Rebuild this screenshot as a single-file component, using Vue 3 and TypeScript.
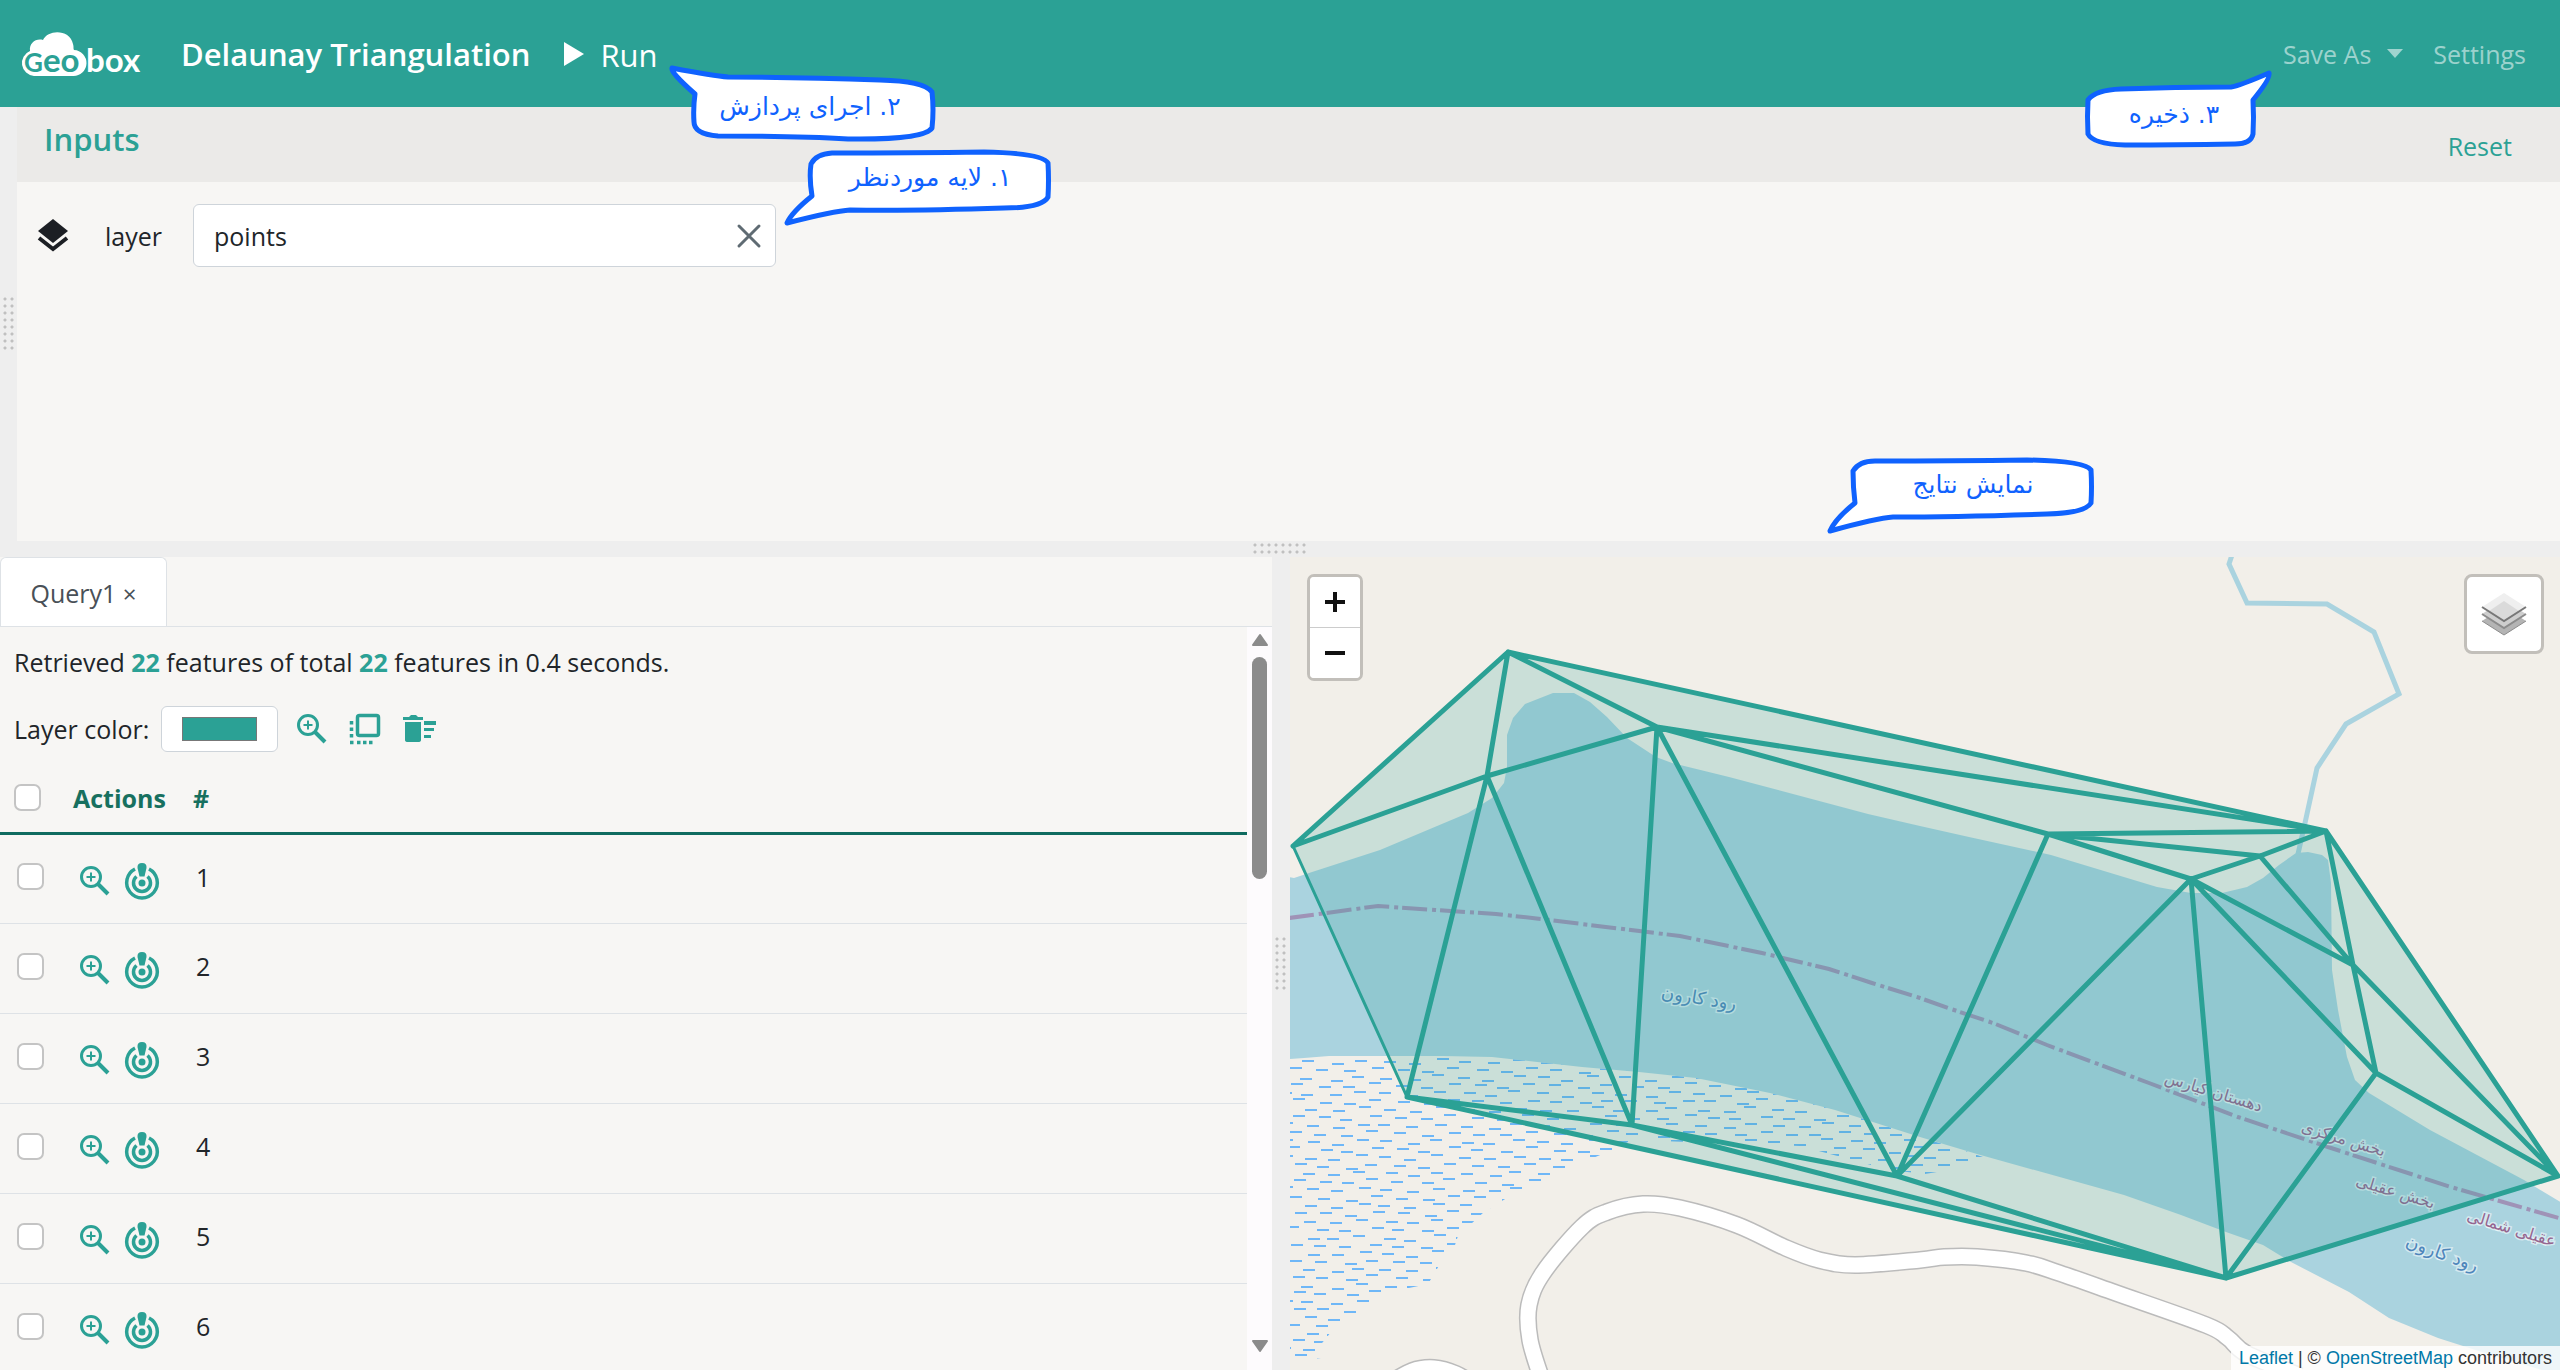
<script setup lang="ts">
import { ref } from 'vue'

type Pt = [number, number]

interface Callout {
  id: string
  text: string
  shape: string
  width: number
  height: number
}

const layerName = ref('points')
const layerColor = ref('#2ba195')
const rows = ref([1, 2, 3, 4, 5, 6].map((n) => ({ n, checked: false })))
const allChecked = ref(false)

const callouts: Callout[] = [
  {
    id: 'at-run',
    text: '۲. اجرای پردازش',
    width: 268,
    height: 78,
    shape: 'M4 4Q2 8 27 30Q25 44 26 58Q26 70 50 72Q130 72 180 75Q256 76 264 64Q266 46 264 28Q256 17 212 16Q130 13 60 13Q46 12 4 4Z',
  },
  {
    id: 'at-layer',
    text: '۱. لایه موردنظر',
    width: 268,
    height: 78,
    shape: 'M3 73Q8 62 28 46Q25 28 27 14Q32 4 48 3Q130 3 200 2Q258 3 264 13Q265 30 264 47Q258 58 220 58Q130 61 66 60Q50 61 3 73Z',
  },
  {
    id: 'at-save',
    text: '۳. ذخیره',
    width: 188,
    height: 78,
    shape: 'M184 3Q186 8 168 30Q169 48 168 64Q166 74 150 74Q90 75 40 75Q8 74 3 64Q2 46 3 30Q10 20 36 19Q90 17 146 17Q154 16 184 3Z',
  },
  {
    id: 'at-results',
    text: 'نمایش نتایج',
    width: 268,
    height: 78,
    shape: 'M3 74Q8 62 28 46Q26 30 26 14Q32 4 48 4Q130 4 200 3Q258 4 264 13Q265 30 264 46Q258 56 220 57Q130 60 66 60Q50 61 3 74Z',
  },
]

/* Map geometry, in page units; the viewBox starts at the map's corner. */
const vertices: Record<string, Pt> = {
  a: [1508, 652], b: [1293, 846], c: [1487, 776], d: [1657, 727],
  e: [2326, 831], f: [2048, 834], g: [2260, 856], h: [2191, 879],
  i: [2353, 965], j: [2376, 1073], k: [2558, 1176], l: [2226, 1278],
  m: [1407, 1097], n: [1632, 1125], o: [1897, 1176],
}
const edges =
  'ab bc ac cd ad ae de df ef fg fh ge gh hi gi ei ek hj ij ik jk jl kl hl ho fo do dn cn cm mn ml no nl ol'.split(' ')
const edgePath = edges
  .map((e) => `M${vertices[e[0]].join(' ')}L${vertices[e[1]].join(' ')}`)
  .join('')
const hull = ['a', 'e', 'k', 'l', 'm', 'b'].map((v) => vertices[v].join(',')).join(' ')

const water =
  '1289,877 1294,878 1309,873 1380,850 1468,813 1492,798 1504,783 1507,767 1507,735 1513,718 1525,704 1553,693 1574,693 1590,702 1607,717 1627,738 1656,757 1672,763 1729,777 1868,814 1920,826 1969,837 2051,855 2157,887 2191,893 2222,893 2247,887 2263,878 2279,865 2296,853 2308,852 2322,855 2328,860 2331,883 2332,970 2338,1010 2347,1057 2355,1080 2369,1093 2430,1130 2524,1180 2562,1203 2562,1376 2485,1353 2438,1338 2389,1318 2349,1292 2291,1262 2263,1245 2226,1232 2181,1215 2124,1195 1977,1154 1920,1137 1876,1123 1835,1110 1770,1093 1696,1078 1639,1072 1582,1067 1492,1057 1443,1056 1329,1056 1304,1058 1289,1059'
const swampArea =
  '1289,1059 1304,1058 1329,1056 1443,1056 1492,1057 1582,1067 1639,1072 1696,1078 1770,1093 1835,1110 1876,1123 1920,1137 1968,1152 1986,1158 1984,1164 1925,1174 1890,1170 1800,1146 1632,1140 1612,1150 1560,1172 1510,1196 1484,1212 1458,1236 1452,1254 1440,1264 1428,1284 1390,1292 1362,1310 1336,1326 1318,1348 1312,1358 1366,1364 1366,1370 1289,1370'
const stream =
  '2232,555 2229,564 2247,603 2327,604 2374,632 2399,694 2346,724 2317,768 2305,823 2298,854'
const boundary =
  '1289,918 1378,906 1435,910 1496,914 1541,919 1680,936 1762,953 1829,969 1872,983 1920,998 1951,1009 1993,1023 2047,1045 2149,1083 2238,1117 2328,1147 2451,1187 2562,1219'

const road: Pt[] = [
  [1542, 1380], [1530, 1340], [1529, 1305], [1543, 1273], [1582, 1227], [1607, 1212],
  [1643, 1204], [1680, 1208], [1737, 1225], [1786, 1248], [1819, 1260], [1855, 1265],
  [1920, 1260], [1944, 1257], [1977, 1257], [2026, 1263], [2059, 1273], [2116, 1293],
  [2206, 1325], [2228, 1338], [2247, 1354], [2300, 1376],
]
const sideRoad: Pt[] = [[1385, 1386], [1412, 1371], [1434, 1368], [1456, 1374], [1480, 1388]]

function smooth(p: Pt[]): string {
  let d = `M${p[0][0]} ${p[0][1]}`
  for (let i = 0; i < p.length - 1; i++) {
    const p0 = p[Math.max(i - 1, 0)]
    const p1 = p[i]
    const p2 = p[i + 1]
    const p3 = p[Math.min(i + 2, p.length - 1)]
    d += `C${p1[0] + (p2[0] - p0[0]) / 6} ${p1[1] + (p2[1] - p0[1]) / 6} ${p2[0] - (p3[0] - p1[0]) / 6} ${p2[1] - (p3[1] - p1[1]) / 6} ${p2[0]} ${p2[1]}`
  }
  return d
}
const roads = [smooth(road), smooth(sideRoad)]

function swampDashes(): string {
  let d = ''
  let seed = 7
  const rand = () => {
    seed = (seed * 16807) % 2147483647
    return seed / 2147483647
  }
  for (let r = 0; r < 38; r++) {
    for (let c = 0; c < 29; c++) {
      const x = 1278 + c * 26 + (r % 2) * 13 + Math.round(rand() * 8 - 4)
      const y = 1059 + r * 8 + (c % 3) * 2 + Math.round(rand() * 2)
      d += `M${x} ${y}h12`
    }
  }
  return d
}
const swamp = swampDashes()
</script>

<template>
  <div class="app">
    <header class="topbar">
      <a class="logo" href="#" aria-label="Geobox">
        <svg width="124" height="48" viewBox="0 0 124 48">
          <path
            d="M14 46A13 13 0 0 1 10 21C9 13 16 8 23 10C28 -1 50 -1 53 14C54 17 53 19 54 20A13 13 0 0 1 53 46Z"
            fill="#fff"
          />
          <text x="4" y="42" class="logo-geo"><tspan class="cap">G</tspan>eo</text>
          <text x="66" y="42" class="logo-box">box</text>
        </svg>
      </a>
      <h1>Delaunay Triangulation</h1>
      <button class="run" type="button">
        <svg width="20" height="24" viewBox="0 0 20 24"><path d="M0 0L20 12L0 24Z" fill="#fff" /></svg>
        <span>Run</span>
      </button>
      <nav>
        <button class="nav-item" type="button">
          Save As
          <svg width="16" height="9" viewBox="0 0 16 9"><path d="M0 0H16L8 9Z" fill="currentColor" /></svg>
        </button>
        <a class="nav-item" href="#">Settings</a>
      </nav>
    </header>

    <section class="inputs">
      <div class="side-handle"><i class="grip tall"></i></div>
      <div class="inputs-panel">
        <div class="inputs-head">
          <h2>Inputs</h2>
          <a href="#">Reset</a>
        </div>
        <div class="field">
          <svg width="32" height="34" viewBox="0 0 32 34">
            <path d="M16 0L31 12L16 24L1 12Z" fill="#1c1f24" />
            <path d="M2 19L16 30L30 19" fill="none" stroke="#1c1f24" stroke-width="4" />
          </svg>
          <label for="layer">layer</label>
          <div class="combo">
            <input id="layer" v-model="layerName" type="text" />
            <button type="button" aria-label="Clear" @click="layerName = ''">
              <svg width="24" height="24" viewBox="0 0 24 24">
                <path d="M2 2L22 22M22 2L2 22" stroke="#5f6b73" stroke-width="3" stroke-linecap="round" />
              </svg>
            </button>
          </div>
        </div>
      </div>
    </section>

    <div class="row-splitter"><i class="grip wide"></i></div>

    <section class="results">
      <div class="query">
        <div class="tabs">
          <button class="tab" type="button">Query1 <span class="close">×</span></button>
        </div>
        <div class="query-body">
          <div class="query-content">
            <p class="summary">Retrieved <b>22</b> features of total <b>22</b> features in 0.4 seconds.</p>
            <div class="tools">
              <label for="color">Layer color:</label>
              <input id="color" v-model="layerColor" type="color" />
              <button type="button" aria-label="Zoom to layer">
                <svg width="32" height="32" viewBox="0 0 32 32" class="line-icon">
                  <circle cx="12" cy="12" r="9.5" stroke-width="3" />
                  <path d="M12 7.500V16.500M7.500 12H16.500" stroke-width="2" />
                  <path d="M19 19L29 29" stroke-width="4" />
                </svg>
              </button>
              <button type="button" aria-label="Bring to front">
                <svg width="32" height="32" viewBox="0 0 32 32" class="line-icon">
                  <rect x="8.500" y="2.500" width="21" height="20" rx="2" stroke-width="3.500" />
                  <path d="M2.500 8V11.500M2.500 14.500V18M2.500 21V24.500M8 29.500H11.500M14 29.500H17.500M20 29.500H23.500" stroke-width="3.500" />
                  <path d="M1 29.500H4.500" stroke-width="3.500" />
                </svg>
              </button>
              <button type="button" aria-label="Clear results">
                <svg width="34" height="32" viewBox="0 0 34 32" fill="#2ba195">
                  <path d="M1 4H7L9 2H14L16 4H21V7H1ZM3 9H19V27Q19 29 16 29H6Q3 29 3 27Z" />
                  <path d="M22 8H34V12H22ZM22 15H32V18H22ZM22 22H29V25H22Z" />
                </svg>
              </button>
            </div>
            <table>
              <thead>
                <tr>
                  <th class="pick"><input v-model="allChecked" type="checkbox" aria-label="Select all" /></th>
                  <th class="actions">Actions</th>
                  <th>#</th>
                </tr>
              </thead>
              <tbody>
                <tr v-for="row in rows" :key="row.n">
                  <td class="pick"><input v-model="row.checked" type="checkbox" :aria-label="`Select row ${row.n}`" /></td>
                  <td class="actions">
                    <div class="action-set">
                      <button type="button" aria-label="Zoom to feature">
                        <svg width="32" height="32" viewBox="0 0 32 32" class="line-icon">
                          <circle cx="12" cy="12" r="9.5" stroke-width="3" />
                          <path d="M12 7.500V16.500M7.500 12H16.500" stroke-width="2" />
                          <path d="M19 19L29 29" stroke-width="4" />
                        </svg>
                      </button>
                      <button type="button" aria-label="Locate feature">
                        <svg width="36" height="40" viewBox="0 0 36 40" class="line-icon">
                          <path d="M11 8A15.300 15.300 0 1 0 25 8" stroke-width="3.500" />
                          <path d="M12.500 15.500A8.500 8.500 0 1 0 23.500 15.500" stroke-width="3.500" />
                          <circle cx="18" cy="22" r="3.500" class="solid" />
                          <path d="M18 2Q23 2 22.500 7L20.500 15.500H15.500L13.500 7Q13 2 18 2Z" class="solid" />
                        </svg>
                      </button>
                    </div>
                  </td>
                  <td class="num">{{ row.n }}</td>
                </tr>
              </tbody>
            </table>
          </div>
          <div class="scroll" aria-hidden="true">
            <svg width="16" height="12" viewBox="0 0 16 12"><path d="M8 1L15 11H1Z" class="arrow" /></svg>
            <i class="thumb"></i>
            <svg width="16" height="12" viewBox="0 0 16 12"><path d="M8 11L15 1H1Z" class="arrow" /></svg>
          </div>
        </div>
      </div>

      <div class="col-splitter"><i class="grip tall"></i></div>

      <div class="map">
        <svg class="map-canvas" viewBox="1290 557 1270 813" preserveAspectRatio="xMinYMin slice">
          <defs>
            <clipPath id="swamp-area"><polygon :points="swampArea" /></clipPath>
          </defs>
          <polygon :points="water" fill="#aad3df" />
          <polyline :points="stream" fill="none" stroke="#aad3df" stroke-width="5" />
          <path :d="swamp" stroke="#6fb7f7" stroke-width="2" clip-path="url(#swamp-area)" />
          <g fill="none">
            <path v-for="d in roads" :key="d" :d="d" stroke="#bbb" stroke-width="18" />
            <path v-for="d in roads" :key="d" :d="d" stroke="#fff" stroke-width="15" />
          </g>
          <polyline
            :points="boundary" fill="none" stroke="#94538f" stroke-opacity="0.5"
            stroke-width="4" stroke-dasharray="25 5 4 4"
          />
          <g class="map-labels">
            <text class="river" transform="translate(1698 1004) rotate(9)">رود کارون</text>
            <text transform="translate(2212 1097) rotate(17)">دهستان کیارس</text>
            <text transform="translate(2342 1144) rotate(17)">بخش مرکزی</text>
            <text transform="translate(2394 1197) rotate(17)">بخش عقیلی</text>
            <text class="from-left" transform="translate(2466 1220) rotate(17)">عقیلی شمالی</text>
            <text class="river" transform="translate(2440 1259) rotate(20)">رود کارون</text>
          </g>
          <polygon :points="hull" :fill="layerColor" fill-opacity="0.2" />
          <g fill="none" :stroke="layerColor" stroke-linejoin="round" stroke-linecap="round">
            <path :d="edgePath" stroke-width="5" />
            <path d="M1293 846L1407 1097" stroke-width="3" />
          </g>
        </svg>
        <div class="zoom">
          <button type="button" aria-label="Zoom in">
            <svg width="20" height="20" viewBox="0 0 20 20"><path d="M10 0V20M0 10H20" stroke="#111" stroke-width="4" /></svg>
          </button>
          <button type="button" aria-label="Zoom out">
            <svg width="20" height="20" viewBox="0 0 20 20"><path d="M0 10H20" stroke="#111" stroke-width="4" /></svg>
          </button>
        </div>
        <button class="layers" type="button" aria-label="Layers">
          <svg width="46" height="46" viewBox="0 0 46 46">
            <path d="M1 30L23 16L45 30L23 44Z" fill="#b4b4b4" />
            <path d="M1 30L23 44L45 30" fill="none" stroke="#8c8c8c" />
            <path d="M1 23L23 9L45 23L23 37Z" fill="#cecece" />
            <path d="M1 23L23 37L45 23" fill="none" stroke="#8c8c8c" stroke-width="2" />
            <path d="M1 16L23 2L45 16L23 30Z" fill="#efefef" />
            <path d="M8 20L23 10L38 20L23 29Z" fill="#dadada" />
            <path d="M1 16L23 30L45 16" fill="none" stroke="#777" stroke-width="2" />
          </svg>
        </button>
        <div class="credit"><a href="#">Leaflet</a> | © <a href="#">OpenStreetMap</a> contributors</div>
      </div>
    </section>

    <aside v-for="c in callouts" :key="c.id" class="callout" :class="c.id">
      <svg :width="c.width" :height="c.height" :viewBox="`0 0 ${c.width} ${c.height}`">
        <path :d="c.shape" fill="#fff" stroke="#0f62fe" stroke-width="5" stroke-linejoin="round" />
      </svg>
      <span dir="rtl">{{ c.text }}</span>
    </aside>
  </div>
</template>

<style>
body {
  overflow: hidden;
}
</style>

<style scoped>
.app {
  position: relative;
  display: flex;
  flex-direction: column;
  height: 100vh;
  overflow: hidden;
  background: #f7f6f4;
  color: #212529;
  font: 25px/36px "Open Sans", "Noto Sans", sans-serif;
}
.app * {
  box-sizing: border-box;
}
svg {
  display: block;
  flex: none;
  overflow: visible;
}
button {
  padding: 0;
  border: 0;
  background: none;
  color: inherit;
  font: inherit;
  cursor: pointer;
}
a {
  text-decoration: none;
}

.topbar {
  display: flex;
  align-items: center;
  flex: 0 0 107px;
  padding: 0 34px 0 20px;
  background: #2ba195;
  color: #fff;
}
.logo-geo,
.logo-box {
  font: 700 33px "Lato", sans-serif;
  fill: #fff;
}
.logo-geo {
  fill: #2ba195;
}
.cap {
  font-size: 26px;
}
h1 {
  margin: 0 0 0 37px;
  font-size: 31px;
  line-height: 40px;
  font-weight: 600;
}
.run {
  display: flex;
  align-items: center;
  gap: 16px;
  margin-left: 34px;
  font-size: 31px;
  line-height: 40px;
}
.run span {
  padding-top: 3px;
}
nav {
  display: flex;
  gap: 30px;
  margin-left: auto;
  color: rgba(255, 255, 255, 0.55);
}
.nav-item {
  display: flex;
  align-items: center;
  gap: 16px;
  color: inherit;
}

.inputs {
  display: flex;
  flex: 0 0 434px;
}
.side-handle {
  display: flex;
  align-items: center;
  flex: 0 0 17px;
  padding-left: 3px;
  background: #eee;
}
.grip {
  background: radial-gradient(circle at 2px 2px, #c0c0c0 1px, transparent 2px) 0 0 / 7px 7px;
}
.grip.tall {
  width: 12px;
  height: 54px;
}
.grip.wide {
  width: 54px;
  height: 12px;
}
.inputs-panel {
  flex: 1;
}
.inputs-head {
  display: flex;
  align-items: center;
  justify-content: space-between;
  height: 75px;
  padding: 0 48px 0 27px;
  background: #ebeae8;
}
.inputs-head a {
  margin-top: 2px;
  color: #2ba195;
}
h2 {
  margin: 0 0 12px;
  color: #2ba195;
  font-size: 31px;
  line-height: 40px;
  font-weight: 600;
}
.field {
  display: flex;
  align-items: center;
  padding: 22px 20px;
}
.field label {
  width: 88px;
  margin-left: 36px;
}
.combo {
  display: flex;
  align-items: center;
  width: 583px;
  height: 63px;
  padding: 0 14px 0 20px;
  border: 1px solid #ced4da;
  border-radius: 6px;
  background: #fff;
}
.combo input {
  flex: 1;
  min-width: 0;
  padding: 0;
  border: 0;
  outline: 0;
  background: none;
  color: inherit;
  font: inherit;
}

.row-splitter {
  display: flex;
  align-items: center;
  justify-content: center;
  flex: 0 0 16px;
  background: #eee;
}

.results {
  display: flex;
  flex: 1;
  min-height: 0;
}
.query {
  display: flex;
  flex-direction: column;
  width: calc(50% - 8px);
}
.tabs {
  display: flex;
  flex: 0 0 69px;
  border-bottom: 1px solid #dee2e6;
}
.tab {
  width: 167px;
  height: 69px;
  padding-top: 2px;
  border: 1px solid #dee2e6;
  border-bottom: 0;
  border-radius: 6px 6px 0 0;
  background: #fff;
  color: #495057;
}
.close {
  font-size: 24px;
}
.query-body {
  display: flex;
  flex: 1;
  min-height: 0;
}
.query-content {
  flex: 1;
  overflow: hidden;
}
.summary {
  margin: 17px 14px 0;
}
.summary b {
  color: #2ba195;
}
.tools {
  display: flex;
  align-items: center;
  height: 46px;
  margin: 26px 14px 0;
}
.tools button {
  margin-left: 21px;
}
.tools input {
  width: 117px;
  height: 46px;
  margin: 0 -3px 0 12px;
  padding: 10px 20px;
  border: 1px solid #ced4da;
  border-radius: 6px;
  background: #fff;
}
.tools input::-webkit-color-swatch-wrapper {
  padding: 0;
}
.tools input::-webkit-color-swatch {
  border: 1px solid #777;
  border-radius: 0;
}
.line-icon {
  fill: none;
  stroke: #2ba195;
}
.solid {
  fill: #2ba195;
  stroke: none;
}
table {
  width: 100%;
  border-collapse: collapse;
  margin-top: 12px;
  text-align: left;
}
th {
  height: 69px;
  padding: 0;
  border-bottom: 3px solid #0f6b60;
  color: #17705f;
  font-weight: 700;
}
td {
  height: 90px;
  padding: 0 0 4px;
  border-bottom: 1px solid #dee2e6;
}
.num {
  padding-left: 3px;
}
.pick {
  width: 73px;
  padding-left: 14px;
}
td.pick {
  padding-left: 17px;
}
th.actions,
td.actions {
  width: 120px;
}
.pick input {
  display: block;
  width: 27px;
  height: 27px;
  margin: 0;
  appearance: none;
  border: 2px solid #c4c4c4;
  border-radius: 7px;
  background: #fff;
}
.pick input:checked {
  background: #2ba195;
}
.action-set {
  display: flex;
  align-items: center;
  gap: 13px;
  padding: 8px 0 0 6px;
}
.scroll {
  display: flex;
  flex-direction: column;
  align-items: center;
  flex: 0 0 25px;
  padding: 7px 0 18px;
  background: #fdfbfd;
}
.scroll svg:last-child {
  margin-top: auto;
}
.arrow {
  fill: #8b8b8b;
  stroke: #8b8b8b;
  stroke-width: 2;
  stroke-linejoin: round;
}
.thumb {
  width: 15px;
  height: 222px;
  margin-top: 11px;
  border-radius: 8px;
  background: #8b8b8b;
}
.col-splitter {
  display: flex;
  align-items: center;
  justify-content: center;
  flex: 0 0 18px;
  background: #eee;
}

.map {
  position: relative;
  flex: 1;
  overflow: hidden;
  background: #f2efe9;
}
.map-canvas {
  width: 100%;
  height: 100%;
  overflow: hidden;
}
.map-labels text {
  font: 16px "DejaVu Sans", sans-serif;
  direction: rtl;
  text-anchor: middle;
  fill: #95658f;
  stroke: rgba(255, 255, 255, 0.5);
  stroke-width: 3px;
  paint-order: stroke;
}
.map-labels .river {
  font-size: 18px;
  fill: #4f86bb;
}
.map-labels .from-left {
  text-anchor: end;
}
.zoom {
  position: absolute;
  top: 17px;
  left: 17px;
  border: 3px solid #c2bfba;
  border-radius: 7px;
  overflow: hidden;
}
.zoom button {
  display: flex;
  align-items: center;
  justify-content: center;
  width: 50px;
  height: 50px;
  background: #fff;
}
.zoom button + button {
  height: 51px;
  border-top: 1px solid #ccc;
}
.layers {
  position: absolute;
  top: 17px;
  right: 16px;
  display: flex;
  align-items: center;
  justify-content: center;
  width: 80px;
  height: 80px;
  border: 3px solid #c2bfba;
  border-radius: 8px;
  background: #fff;
}
.credit {
  position: absolute;
  right: 0;
  bottom: 0;
  padding: 0 8px;
  background: rgba(255, 255, 255, 0.8);
  color: #333;
  font: 18px/24px "Liberation Sans", Arial, sans-serif;
}
.credit a {
  color: #0078a8;
}

.callout {
  position: absolute;
  color: #0f62fe;
}
.callout span {
  position: absolute;
  top: 25px;
  right: 32px;
  left: 48px;
  text-align: center;
  white-space: nowrap;
  font: 25px/36px "DejaVu Sans", sans-serif;
}
.at-run {
  top: 64px;
  left: 668px;
}
.at-layer {
  top: 150px;
  left: 784px;
}
.at-save {
  top: 70px;
  right: 287px;
}
.at-save span {
  top: 27px;
  right: 20px;
  left: 10px;
}
.at-results {
  top: 457px;
  right: 465px;
}
.at-layer span,
.at-results span {
  top: 10px;
  left: 56px;
}
</style>
